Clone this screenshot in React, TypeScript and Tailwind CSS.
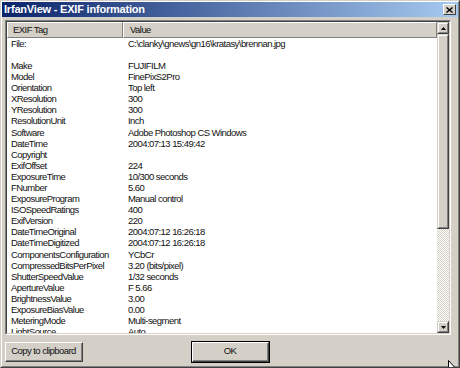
import React from 'react';

const rows: [string, string][] = [
  ['File:', 'C:\\clanky\\gnews\\gn16\\kratasy\\brennan.jpg'],
  ['', ''],
  ['Make', 'FUJIFILM'],
  ['Model', 'FinePixS2Pro'],
  ['Orientation', 'Top left'],
  ['XResolution', '300'],
  ['YResolution', '300'],
  ['ResolutionUnit', 'Inch'],
  ['Software', 'Adobe Photoshop CS Windows'],
  ['DateTime', '2004:07:13 15:49:42'],
  ['Copyright', ''],
  ['ExifOffset', '224'],
  ['ExposureTime', '10/300 seconds'],
  ['FNumber', '5.60'],
  ['ExposureProgram', 'Manual control'],
  ['ISOSpeedRatings', '400'],
  ['ExifVersion', '220'],
  ['DateTimeOriginal', '2004:07:12 16:26:18'],
  ['DateTimeDigitized', '2004:07:12 16:26:18'],
  ['ComponentsConfiguration', 'YCbCr'],
  ['CompressedBitsPerPixel', '3.20 (bits/pixel)'],
  ['ShutterSpeedValue', '1/32 seconds'],
  ['ApertureValue', 'F 5.66'],
  ['BrightnessValue', '3.00'],
  ['ExposureBiasValue', '0.00'],
  ['MeteringMode', 'Multi-segment'],
  ['LightSource', 'Auto'],
];

// raised 3d edge used by scrollbar buttons
const ScrollButton = ({ down }: { down?: boolean }) => (
  <div className="w-[12px] h-[12px] shrink-0 border border-t-[#d4d0c8] border-l-[#d4d0c8] border-r-[#404040] border-b-[#404040]">
    <div className="w-full h-full flex items-center justify-center bg-[#d4d0c8] border border-t-white border-l-white border-r-[#808080] border-b-[#808080]">
      <svg width="5" height="3" viewBox="0 0 5 3">
        {down ? <polygon points="0,0 5,0 2.5,3" fill="#000" /> : <polygon points="2.5,0 5,3 0,3" fill="#000" />}
      </svg>
    </div>
  </div>
);

export default function App() {
  const font = { fontFamily: '"Liberation Sans", Arial, sans-serif' };

  return (
    <div className="relative w-[460px] h-[368px] overflow-hidden border border-t-[#d4d0c8] border-l-[#d4d0c8] border-r-[#404040] border-b-[#404040]">
      <div className="w-full h-full flex flex-col bg-[#d4d0c8] border border-t-white border-l-white border-r-[#808080] border-b-[#808080]" style={font}>
        {/* title bar */}
        <div className="h-[15px] shrink-0 flex items-center justify-between pl-[2px] pr-[2px] bg-[linear-gradient(to_right,#0a246a,#a6caf0)]">
          <span className="text-white font-bold text-[11px] leading-none tracking-[-0.2px]">
            IrfanView - EXIF information
          </span>
          <div className="w-[13px] h-[11px] border border-t-white border-l-white border-r-[#404040] border-b-[#404040] bg-[#d4d0c8] flex items-center justify-center">
            <svg width="7" height="6" viewBox="0 0 7 6">
              <path d="M0.5 0.5 L6.5 5.5 M6.5 0.5 L0.5 5.5" stroke="#000" strokeWidth="1.4" />
            </svg>
          </div>
        </div>

        <div className="flex flex-col pl-[3px] pt-[3px] text-[9.5px] tracking-[-0.55px] text-[#111]">
          {/* list view */}
          <div className="w-[446px] h-[315px] border border-t-[#808080] border-l-[#808080] border-r-white border-b-white">
            <div className="w-full h-full flex bg-white border border-t-[#404040] border-l-[#404040] border-r-[#d4d0c8] border-b-[#d4d0c8] overflow-hidden">
              <div className="flex-1 flex flex-col overflow-hidden">
                <div className="h-[16px] shrink-0 flex leading-none">
                  <div className="w-[116px] h-full flex items-center pl-[5px] bg-[#d4d0c8] border border-t-white border-l-white border-r-[#808080] border-b-[#808080]">
                    EXIF Tag
                  </div>
                  <div className="flex-1 h-full flex items-center pl-[6px] bg-[#d4d0c8] border border-t-white border-l-white border-r-[#808080] border-b-[#808080]">
                    Value
                  </div>
                </div>
                {rows.map(([tag, value], i) => (
                  <div key={i} className="h-[11.1px] shrink-0 flex items-center leading-none whitespace-nowrap">
                    <div className="w-[116px] pl-[4px]">{tag}</div>
                    <div className="flex-1 pl-[5px]">{value}</div>
                  </div>
                ))}
              </div>
              {/* scrollbar */}
              <div className="w-[12px] h-full flex flex-col">
                <ScrollButton />
                <div className="h-[195px] shrink-0 border border-t-[#d4d0c8] border-l-[#d4d0c8] border-r-[#404040] border-b-[#404040]">
                  <div className="w-full h-full bg-[#d4d0c8] border border-t-white border-l-white border-r-[#808080] border-b-[#808080]" />
                </div>
                <div className="flex-1 bg-[conic-gradient(#ffffff_25%,#d4d0c8_0_50%,#ffffff_0_75%,#d4d0c8_0)] bg-[length:2px_2px]" />
                <ScrollButton down />
              </div>
            </div>
          </div>

          {/* buttons */}
          <div className="flex items-center mt-[6px] whitespace-nowrap">
            <div className="w-[78px] h-[20px] border border-t-white border-l-white border-r-[#404040] border-b-[#404040]">
              <div className="w-full h-full flex items-center justify-center border-r border-b border-r-[#808080] border-b-[#808080]">
                Copy to clipboard
              </div>
            </div>
            <div className="ml-[108px] w-[79px] h-[22px] border border-black">
              <div className="w-full h-full border border-t-white border-l-white border-r-[#404040] border-b-[#404040]">
                <div className="w-full h-full flex items-center justify-center border-r border-b border-r-[#808080] border-b-[#808080]">
                  OK
                </div>
              </div>
            </div>
          </div>
        </div>
      </div>

      {/* mouse pointer over the corner */}
      <svg className="absolute left-[447px] top-[359px]" width="12" height="18" viewBox="0 0 12 18">
        <path d="M0.5 0.5 L0.5 14 L3.5 11 L6 16.5 L8 15.5 L5.5 10.5 L9.5 10.5 Z" fill="#fff" stroke="#000" strokeWidth="1" />
      </svg>
    </div>
  );
}
